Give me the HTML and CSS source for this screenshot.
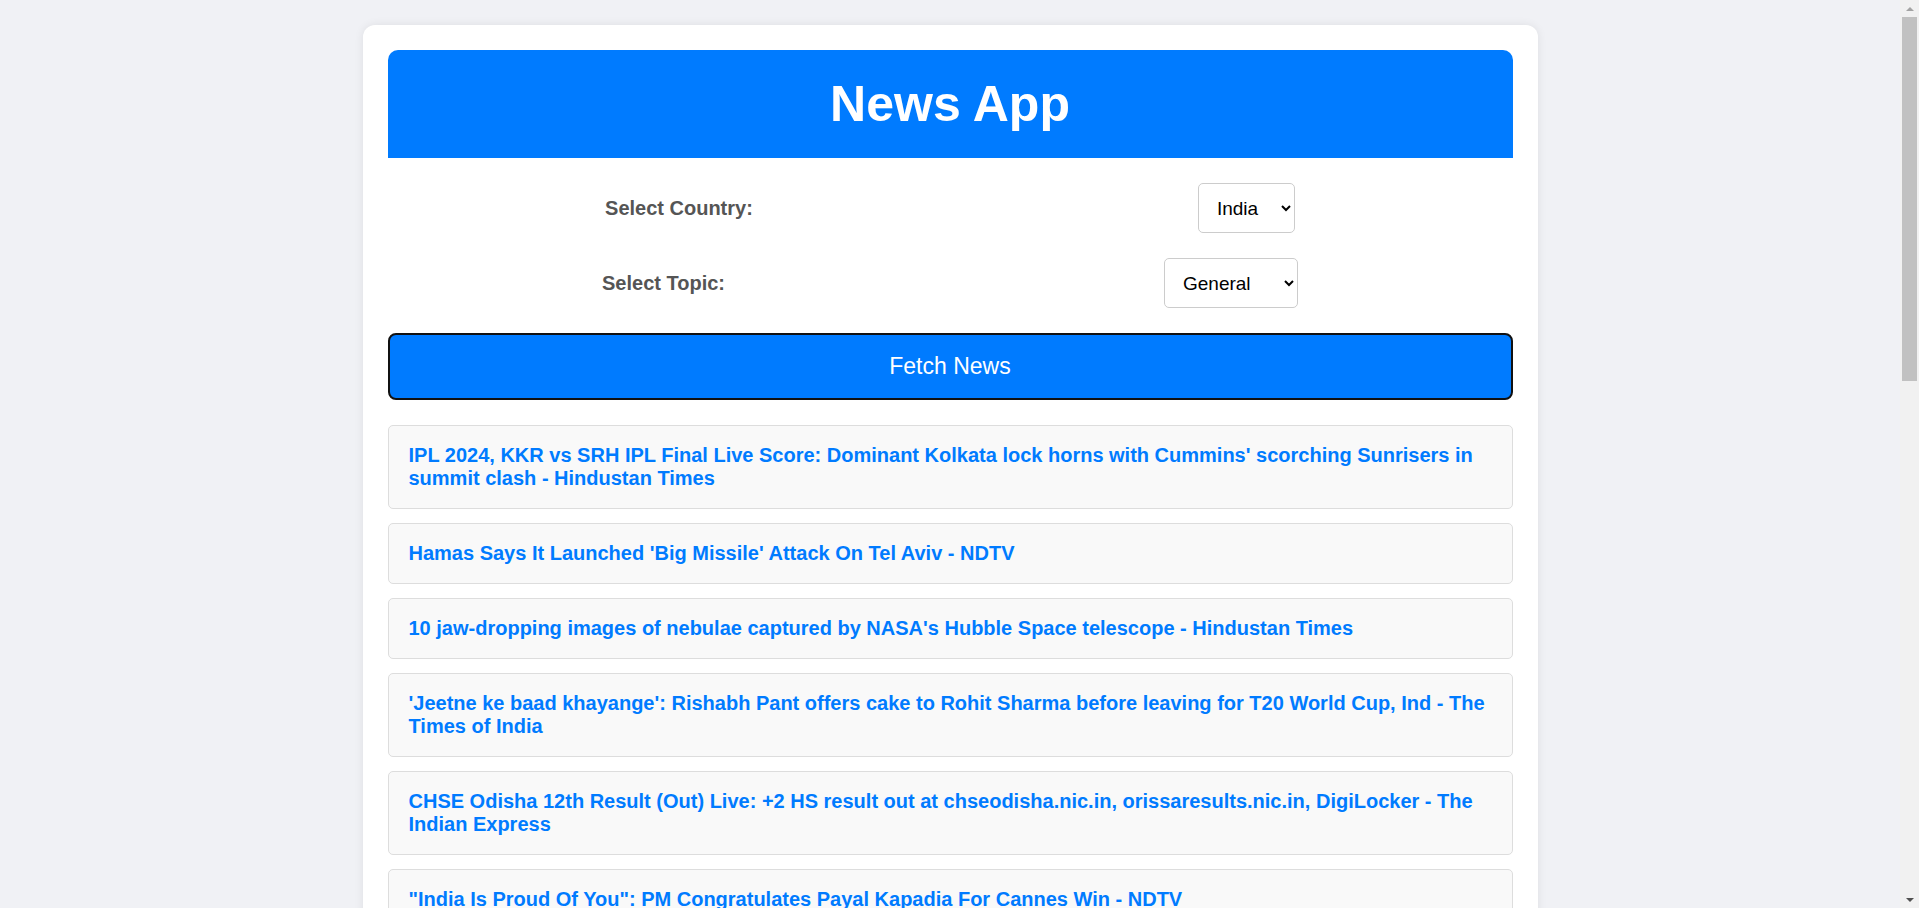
FILE: index.html
```html
<!DOCTYPE html>
<html lang="en">
<head>
<meta charset="utf-8">
<title>News App</title>
<link rel="stylesheet" href="styles.css">
</head>
<body>
<div class="viewport">
  <div class="container">
    <header class="header">
      <h1>News App</h1>
    </header>
    <div class="controls">
      <div class="row">
        <label class="label" for="country">Select Country:</label>
        <select id="country" class="select select-country">
          <option>India</option>
        </select>
      </div>
      <div class="row">
        <label class="label" for="topic">Select Topic:</label>
        <select id="topic" class="select select-topic">
          <option>General</option>
        </select>
      </div>
    </div>
    <button class="fetch">Fetch News</button>
    <div class="news">
      <div class="item"><a href="#">IPL 2024, KKR vs SRH IPL Final Live Score: Dominant Kolkata lock horns with Cummins' scorching Sunrisers in summit clash - Hindustan Times</a></div>
      <div class="item"><a href="#">Hamas Says It Launched 'Big Missile' Attack On Tel Aviv - NDTV</a></div>
      <div class="item"><a href="#">10 jaw-dropping images of nebulae captured by NASA's Hubble Space telescope - Hindustan Times</a></div>
      <div class="item"><a href="#">'Jeetne ke baad khayange': Rishabh Pant offers cake to Rohit Sharma before leaving for T20 World Cup, Ind - The Times of India</a></div>
      <div class="item"><a href="#">CHSE Odisha 12th Result (Out) Live: +2 HS result out at chseodisha.nic.in, orissaresults.nic.in, DigiLocker - The Indian Express</a></div>
      <div class="item"><a href="#">"India Is Proud Of You": PM Congratulates Payal Kapadia For Cannes Win - NDTV</a></div>
      <div class="item"><a href="#">Cyclone Remal to make landfall between Bangladesh and West Bengal coasts tonight, IMD issues red alert for coastal districts - The Economic Times</a></div>
      <div class="item"><a href="#">Delhi hospital fire: 7 newborns dead at baby care centre in Vivek Vihar, owner arrested - India Today</a></div>
      <div class="item"><a href="#">Rajkot game zone fire: Death toll rises to 27, Gujarat HC calls it 'man-made disaster' - The Hindu</a></div>
      <div class="item"><a href="#">Sensex, Nifty hit fresh record highs as FPIs turn buyers; banking and financial stocks lead the gains on Dalal Street - Moneycontrol</a></div>
      <div class="item"><a href="#">Lok Sabha Elections 2024 Phase 6: 63.37% voter turnout recorded across 58 constituencies - Mint</a></div>
      <div class="item"><a href="#">Samsung Galaxy S24 FE launch timeline, specifications tipped ahead of debut - Gadgets 360</a></div>
      <div class="item"><a href="#">Heatwave grips north India, Delhi records 47.4°C; IMD issues red alert for five states - NDTV</a></div>
      <div class="item"><a href="#">ISRO successfully test-fires 3D-printed rocket engine for PSLV upper stage - Business Standard</a></div>
      <div class="item"><a href="#">Monsoon likely to hit Kerala coast by May 31, says India Meteorological Department - The Hindu</a></div>
      <div class="item"><a href="#">Gold price today: Yellow metal slips as dollar strengthens ahead of US inflation data - Mint</a></div>
      <div class="item"><a href="#">Apple WWDC 2024: iOS 18 to bring AI features, redesigned Siri, report says - Gadgets 360</a></div>
      <div class="item"><a href="#">Neeraj Chopra to compete at Paavo Nurmi Games in Finland ahead of Paris Olympics - The Times of India</a></div>
      <div class="item"><a href="#">Papua New Guinea landslide: Over 670 feared dead, UN agency says - NDTV</a></div>
      <div class="item"><a href="#">Bengaluru rains: Heavy downpour lashes city, waterlogging reported in several areas - Deccan Herald</a></div>
    </div>
  </div>
</div>
<div class="scrollbar" aria-hidden="true">
  <div class="sb-button"><span class="sb-arrow-up"></span></div>
  <div class="sb-thumb"></div>
  <div class="sb-track"></div>
  <div class="sb-button"><span class="sb-arrow-down"></span></div>
</div>
</body>
</html>
```

FILE: styles.css
```css
html,
body {
  height: 100%;
}

body {
  margin: 0;
  display: flex;
  overflow: hidden;
  background: #f0f1f5;
  font-family: "Liberation Sans", Arial, sans-serif;
}

.viewport {
  flex: 1;
  min-width: 0;
  height: 100vh;
  overflow: hidden;
}

.container {
  max-width: 1125px;
  margin: 25px auto;
  padding: 25px;
  background: #ffffff;
  border-radius: 12px;
  box-shadow: 0 0 10px rgba(0, 0, 0, 0.08);
}

.header {
  background: #007bff;
  color: #ffffff;
  text-align: center;
  border-radius: 10px 10px 0 0;
  padding: 25px 0;
}

.header h1 {
  margin: 0;
  font-size: 50px;
  font-weight: bold;
  line-height: normal;
}

.controls {
  display: flex;
  flex-direction: column;
  gap: 25px;
  margin-top: 25px;
}

.row {
  display: flex;
  justify-content: space-around;
  align-items: center;
}

.label {
  font-size: 20px;
  font-weight: bold;
  color: #555555;
  margin-right: 10px;
}

.select {
  box-sizing: border-box;
  height: 50px;
  font-family: "Liberation Sans", Arial, sans-serif;
  font-size: 19px;
  color: #000000;
  background: #ffffff;
  border: 1px solid #cccccc;
  border-radius: 5px;
  padding: 0 8px 0 14px;
}

.select-country {
  width: 97px;
}

.select-topic {
  width: 134px;
}

.fetch {
  display: block;
  width: 100%;
  margin-top: 25px;
  padding: 18px;
  font-family: "Liberation Sans", Arial, sans-serif;
  font-size: 23px;
  line-height: 27px;
  color: #ffffff;
  background: #007bff;
  border: 2px solid #111111;
  border-radius: 8px;
}

.news {
  display: flex;
  flex-direction: column;
  gap: 14px;
  margin-top: 25px;
}

.item {
  background: #f9f9f9;
  border: 1px solid #dddddd;
  border-radius: 5px;
  padding: 18px 20px;
  font-size: 20px;
  line-height: 23px;
}

.item a {
  color: #007bff;
  font-weight: bold;
  text-decoration: none;
}

.scrollbar {
  width: 19px;
  height: 100vh;
  flex: none;
  display: flex;
  flex-direction: column;
  background: #f1f1f1;
}

.sb-button {
  height: 17px;
  flex: none;
  display: flex;
  align-items: center;
  justify-content: center;
}

.sb-arrow-up {
  width: 0;
  height: 0;
  border-left: 4px solid transparent;
  border-right: 4px solid transparent;
  border-bottom: 4px solid #a3a3a3;
}

.sb-arrow-down {
  width: 0;
  height: 0;
  border-left: 4px solid transparent;
  border-right: 4px solid transparent;
  border-top: 4px solid #505050;
}

.sb-thumb {
  flex: none;
  height: 364px;
  margin: 0 2px;
  background: #c1c1c1;
}

.sb-track {
  flex: 1;
}
```
